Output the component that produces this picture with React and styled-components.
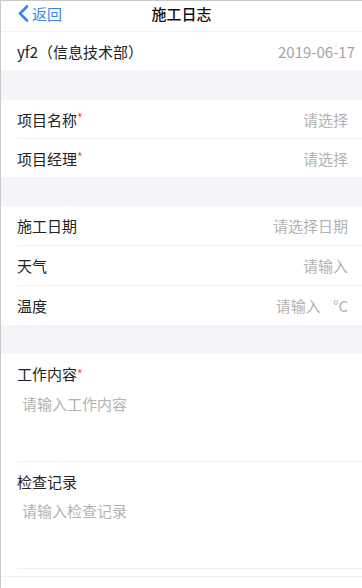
import styled, {createGlobalStyle} from 'styled-components'

const GlobalStyle = createGlobalStyle`
  html, body {
    margin: 0;
    padding: 0;
    background: #fff;
  }
  body {
    font-family: "PingFang SC", "Noto Sans CJK SC", "Noto Sans", sans-serif;
    -webkit-font-smoothing: antialiased;
  }
`

const Page = styled.div`
  width: 361px;
  height: 587px;
  border-top: 1px solid #c9c9c9;
  border-left: 1px solid #c9c9c9;
  background: #fff;
  overflow: hidden;
`

const NavBar = styled.div`
  height: 30px;
  display: grid;
  grid-template-columns: 1fr auto 1fr;
  align-items: center;
  padding: 0 16px;
  border-bottom: 1px solid #f2f2f2;
`

const Back = styled.div`
  display: flex;
  align-items: center;
  gap: 3px;
  color: #3a83f2;
  font-size: 15px;
  margin-top: -5px;
`

const Title = styled.div`
  font-size: 15px;
  font-weight: 500;
  color: #111;
  margin-top: -6px;
`

const Gap = styled.div`
  height: ${p => p.h || 30}px;
  background: #f5f5f9;
`

const Row = styled.div`
  box-sizing: border-box;
  height: ${p => p.h || 39}px;
  margin-left: 16px;
  padding-right: ${p => p.pr || 14}px;
  display: flex;
  align-items: center;
  justify-content: space-between;
  font-size: 15px;
  color: #222;
  border-bottom: ${p => p.last ? 'none' : '1px solid #f0f0f0'};
`

const Star = styled.span`
  color: #e84a45;
  font-size: 12px;
  vertical-align: top;
`

const Value = styled.span`
  color: ${p => p.dim ? '#b2b2b2' : '#a3a3a3'};
  font-size: 15px;
  display: flex;
  gap: 12px;
`

const Block = styled.div`
  margin-left: 16px;
  height: ${p => p.h}px;
  border-bottom: 1px solid #f0f0f0;
  padding-top: 10px;
  box-sizing: border-box;
`

const BlockLabel = styled.div`
  font-size: 15px;
  color: #222;
  line-height: 20px;
`

const Placeholder = styled.div`
  font-size: 15px;
  color: #b2b2b2;
  margin-top: ${p => p.mt || 10}px;
  margin-left: 5px;
  line-height: 20px;
`

const Footer = styled.div`
  margin-top: 7px;
  border-top: 1px solid #f0f0f0;
`

const Chevron = () => (
  <svg width="12" height="17" viewBox="0 0 12 17">
    <path d="M10 1.5 L3 8.5 L10 15.5" fill="none" stroke="#3a83f2" strokeWidth="2.6" strokeLinecap="round" strokeLinejoin="round"/>
  </svg>
)

const App = () => (
  <>
    <GlobalStyle/>
    <Page>
      <NavBar>
        <Back><Chevron/>返回</Back>
        <Title>施工日志</Title>
        <div/>
      </NavBar>
      <Row h={38} pr={7} last>
        <span>yf2（信息技术部）</span>
        <Value>2019-06-17</Value>
      </Row>
      <Gap h={30}/>
      <Row>
        <span>项目名称<Star>*</Star></span>
        <Value dim>请选择</Value>
      </Row>
      <Row h={38} last>
        <span>项目经理<Star>*</Star></span>
        <Value dim>请选择</Value>
      </Row>
      <Gap h={29}/>
      <Row h={40}>
        <span>施工日期</span>
        <Value dim>请选择日期</Value>
      </Row>
      <Row h={40}>
        <span>天气</span>
        <Value dim>请输入</Value>
      </Row>
      <Row h={39} last>
        <span>温度</span>
        <Value dim><span>请输入</span><span>°C</span></Value>
      </Row>
      <Gap h={29}/>
      <Block h={108}>
        <BlockLabel>工作内容<Star>*</Star></BlockLabel>
        <Placeholder>请输入工作内容</Placeholder>
      </Block>
      <Block h={107}>
        <BlockLabel>检查记录</BlockLabel>
        <Placeholder mt={9}>请输入检查记录</Placeholder>
      </Block>
      <Footer/>
    </Page>
  </>
)

export default App
